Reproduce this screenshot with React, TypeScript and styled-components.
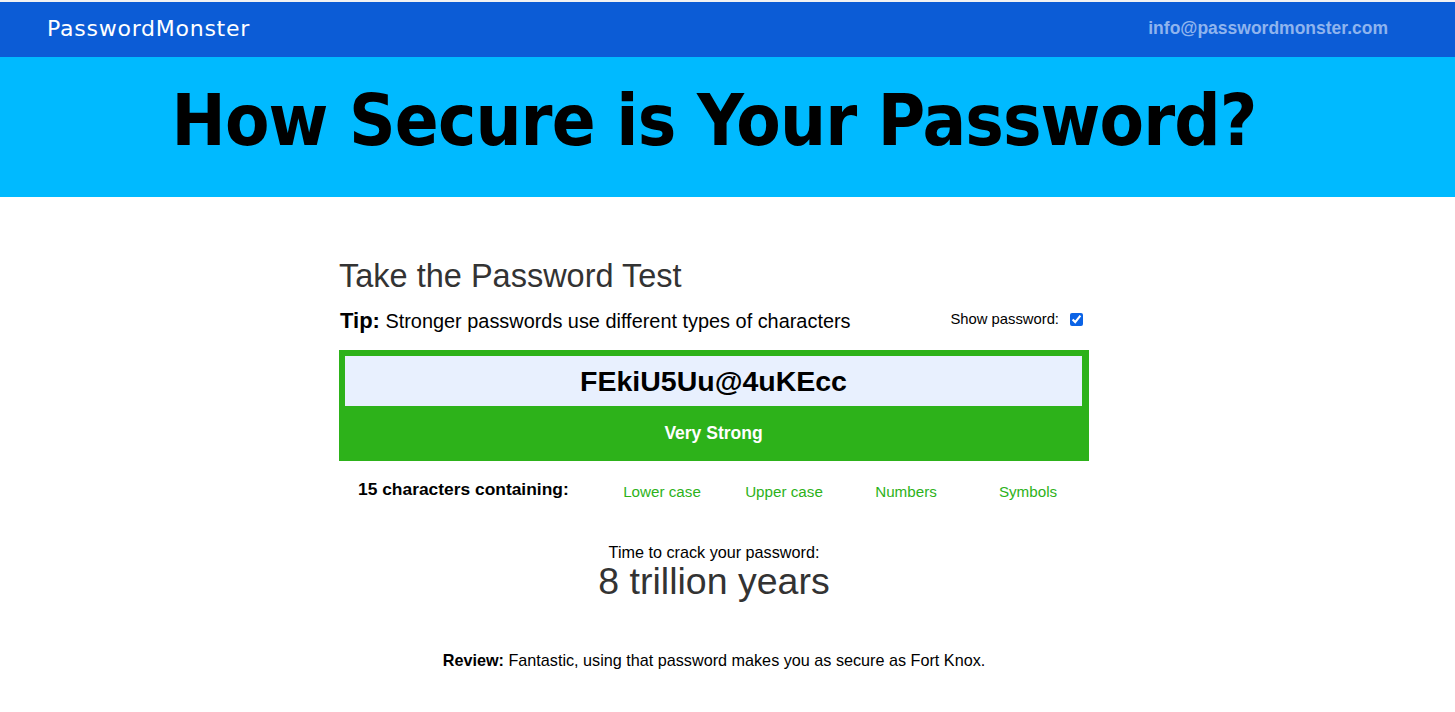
import React from "react";
import styled, { createGlobalStyle } from "styled-components";

const Global = createGlobalStyle`
  html, body { margin: 0; padding: 0; background: #fff; }
  body { font-family: "Liberation Sans", Arial, sans-serif; color: #000; }
`;

const TopLine = styled.div`
  height: 2px;
  background: #f2f2f2;
`;

const NavBar = styled.header`
  height: 55px;
  background: #0c5cd6;
  display: flex;
  align-items: center;
  justify-content: space-between;
  padding: 0 67px 0 47px;
`;

const Logo = styled.div`
  font-family: "DejaVu Sans", sans-serif;
  font-size: 22px;
  color: #fff;
  letter-spacing: 0.75px;
  margin-top: -2px;
`;

const Email = styled.a`
  font-family: "Liberation Sans", Arial, sans-serif;
  font-weight: bold;
  font-size: 17.5px;
  color: #8fb4ee;
  text-decoration: none;
  margin-top: -2px;
`;

const Hero = styled.div`
  height: 140px;
  background: #00baff;
  display: flex;
  align-items: center;
  justify-content: center;
  padding: 0 27px 14px 0;
  box-sizing: border-box;
`;

const Headline = styled.h1`
  margin: 0;
  font-family: "DejaVu Sans Condensed", "DejaVu Sans", sans-serif;
  font-stretch: condensed;
  font-weight: bold;
  font-size: 72px;
  letter-spacing: -0.9px;
  color: #000;
`;

const Main = styled.main`
  display: flex;
  justify-content: center;
  padding: 59px 27px 40px 0;
`;

const Panel = styled.section`
  width: 750px;
  display: flex;
  flex-direction: column;
`;

const Title = styled.h2`
  margin: 0;
  font-weight: normal;
  font-size: 32.5px;
  color: #333;
  line-height: 40px;
`;

const TipRow = styled.div`
  display: flex;
  justify-content: space-between;
  align-items: center;
  margin-top: 12px;
  height: 26px;
`;

const Tip = styled.div`
  font-size: 19.9px;
  padding-left: 1px;
  b { font-size: 22px; }
`;

const ShowLabel = styled.label`
  font-size: 14.8px;
  display: flex;
  align-items: center;
  gap: 11px;
  padding-right: 6px;
  margin-top: -4px;
  input { margin: 0; width: 13px; height: 13px; accent-color: #0b63e6; }
`;

const StrengthBox = styled.div`
  margin-top: 16px;
  background: #2db21a;
  padding: 6px 7px 0 6px;
  height: 111px;
  box-sizing: border-box;
  display: flex;
  flex-direction: column;
`;

const PasswordField = styled.div`
  height: 50px;
  background: #e8f0fe;
  display: flex;
  align-items: center;
  justify-content: center;
  font-weight: bold;
  font-size: 28.5px;
  color: #000;
`;

const StrengthLabel = styled.div`
  flex: 1;
  display: flex;
  align-items: center;
  justify-content: center;
  color: #fff;
  font-weight: bold;
  font-size: 17.5px;
`;

const CharRow = styled.div`
  display: grid;
  grid-template-columns: 262px repeat(4, 1fr);
  align-items: center;
  margin-top: 22px;
`;

const CharLead = styled.div`
  font-weight: bold;
  font-size: 17.4px;
  padding-left: 19px;
  margin-top: -4px;
`;

const CharType = styled.div`
  font-size: 15.2px;
  color: #2db21a;
  text-align: center;
`;

const Crack = styled.div`
  margin-top: 43px;
  text-align: center;
  color: #000;
  font-size: 16.2px;
  line-height: 18px;
`;

const CrackTime = styled.div`
  text-align: center;
  font-size: 37.5px;
  color: #333;
  line-height: 40px;
`;

const Review = styled.p`
  margin: 50px 0 0;
  text-align: center;
  font-size: 16.2px;
  line-height: 18px;
`;

export default function App() {
  return (
    <>
      <Global />
      <TopLine />
      <NavBar>
        <Logo>PasswordMonster</Logo>
        <Email href="#">info@passwordmonster.com</Email>
      </NavBar>
      <Hero>
        <Headline>How Secure is Your Password?</Headline>
      </Hero>
      <Main>
        <Panel>
          <Title>Take the Password Test</Title>
          <TipRow>
            <Tip>
              <b>Tip:</b> Stronger passwords use different types of characters
            </Tip>
            <ShowLabel>
              Show password: <input type="checkbox" defaultChecked />
            </ShowLabel>
          </TipRow>
          <StrengthBox>
            <PasswordField>FEkiU5Uu@4uKEcc</PasswordField>
            <StrengthLabel>Very Strong</StrengthLabel>
          </StrengthBox>
          <CharRow>
            <CharLead>15 characters containing:</CharLead>
            <CharType>Lower case</CharType>
            <CharType>Upper case</CharType>
            <CharType>Numbers</CharType>
            <CharType>Symbols</CharType>
          </CharRow>
          <Crack>Time to crack your password:</Crack>
          <CrackTime>8 trillion years</CrackTime>
          <Review>
            <b>Review:</b> Fantastic, using that password makes you as secure as Fort Knox.
          </Review>
        </Panel>
      </Main>
    </>
  );
}
